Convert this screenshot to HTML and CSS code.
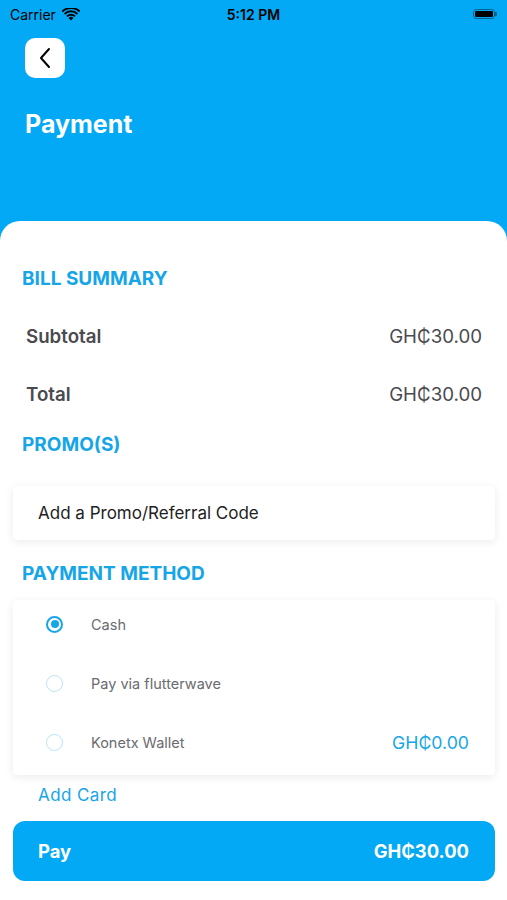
FILE: index.html
```html
<!DOCTYPE html>
<html lang="en">

<head>
    <meta charset="UTF-8">
    <meta name="viewport" content="width=device-width, initial-scale=1.0">
    <title>Payment</title>
    <link rel="stylesheet" href="styles.css">
</head>

<body>
    <div class="status-bar">
        <div class="carrier">
            Carrier
            <svg class="wifi" width="18" height="13" viewBox="0 0 18 13">
                <path d="M9 12.5 L6.6 10 A3.4 3.4 0 0 1 11.4 10 Z" fill="#000" />
                <path d="M4.3 7.7 A6.6 6.6 0 0 1 13.7 7.7 L12.3 9.1 A4.6 4.6 0 0 0 5.7 9.1 Z" fill="#000" />
                <path d="M1.9 5.3 A10 10 0 0 1 16.1 5.3 L14.7 6.7 A8 8 0 0 0 3.3 6.7 Z" fill="#000" />
                <path d="M-0.4 2.9 A13.3 13.3 0 0 1 18.4 2.9 L17 4.3 A11.3 11.3 0 0 0 1 4.3 Z" fill="#000" />
            </svg>
        </div>
        <div class="clock">5:12 PM</div>
        <div class="battery">
            <div class="battery-body"><div class="battery-level"></div></div>
            <div class="battery-cap"></div>
        </div>
    </div>

    <div class="header">
        <button class="back-button">
            <svg width="14" height="22" viewBox="0 0 14 22">
                <path d="M11 2 L3 11 L11 20" fill="none" stroke="#000" stroke-width="2" stroke-linecap="round" stroke-linejoin="round" />
            </svg>
        </button>
        <h1 class="title">Payment</h1>
    </div>

    <div class="sheet">
        <div class="section-title first">BILL SUMMARY</div>
        <div class="summary-row">
            <span class="label">Subtotal</span>
            <span class="amount">GH₵30.00</span>
        </div>
        <div class="summary-row">
            <span class="label">Total</span>
            <span class="amount">GH₵30.00</span>
        </div>

        <div class="section-title promo-title">PROMO(S)</div>
        <div class="card promo-card">Add a Promo/Referral Code</div>

        <div class="section-title method-title">PAYMENT METHOD</div>
        <div class="card method-card">
            <div class="method-row">
                <span class="radio checked"></span>
                <span class="method-name">Cash</span>
            </div>
            <div class="method-row">
                <span class="radio"></span>
                <span class="method-name">Pay via flutterwave</span>
            </div>
            <div class="method-row">
                <span class="radio"></span>
                <span class="method-name">Konetx Wallet</span>
                <span class="wallet-balance">GH₵0.00</span>
            </div>
        </div>

        <div class="add-card">Add Card</div>

        <button class="pay-button">
            <span>Pay</span>
            <span>GH₵30.00</span>
        </button>
    </div>
</body>

</html>
```

FILE: styles.css
```css
body {
    margin: 0;
    padding: 0;
    height: 100vh;
    display: flex;
    flex-direction: column;
    background: #03a9f4;
    font-family: Inter, "Liberation Sans", "DejaVu Sans", sans-serif;
    overflow: hidden;
}

/* status bar */
.status-bar {
    height: 28px;
    display: flex;
    align-items: center;
    justify-content: space-between;
    padding: 0 10px;
    color: #000;
    font-size: 14px;
}

.carrier {
    display: flex;
    align-items: center;
    gap: 6px;
    width: 120px;
}

.clock {
    font-weight: 600;
}

.battery {
    width: 120px;
    display: flex;
    justify-content: flex-end;
    align-items: center;
}

.battery-body {
    width: 22px;
    height: 10px;
    border: 1px solid rgba(0, 0, 0, 0.4);
    border-radius: 3px;
    padding: 1px;
    box-sizing: border-box;
}

.battery-level {
    width: 100%;
    height: 100%;
    background: #000;
    border-radius: 1px;
}

.battery-cap {
    width: 2px;
    height: 4px;
    background: rgba(0, 0, 0, 0.4);
    border-radius: 0 1px 1px 0;
}

/* header */
.header {
    height: 193px;
    padding: 10px 25px 0;
    box-sizing: border-box;
}

.back-button {
    width: 40px;
    height: 40px;
    border: none;
    border-radius: 10px;
    background: #fff;
    display: flex;
    align-items: center;
    justify-content: center;
    padding: 0;
}

.title {
    margin: 31px 0 0;
    font-size: 25px;
    line-height: 30px;
    font-weight: 700;
    color: #fff;
}

/* white sheet */
.sheet {
    flex: 1;
    background: #fff;
    border-radius: 20px 20px 0 0;
    padding: 0 12px 0 13px;
}

.section-title {
    padding-left: 9px;
    font-size: 19px;
    line-height: 24px;
    font-weight: 700;
    color: #16a6e8;
}

.section-title.first {
    margin-top: 46px;
    margin-bottom: 16px;
}

.summary-row {
    height: 58px;
    display: flex;
    align-items: center;
    justify-content: space-between;
    padding: 0 13px 0 13px;
    font-size: 18.7px;
    color: #4a4a4f;
}

.summary-row .label {
    font-weight: 600;
}

.promo-title {
    margin-top: 10px;
}

.card {
    background: #fff;
    border-radius: 4px;
    box-shadow: 0 2px 10px rgba(0, 0, 0, 0.08);
}

.promo-card {
    margin-top: 29px;
    height: 54px;
    display: flex;
    align-items: center;
    padding-left: 25px;
    font-size: 17px;
    color: #1e1e1e;
}

.method-title {
    margin-top: 22px;
}

.method-card {
    margin-top: 14px;
    padding: 0 26px 9px 33px;
    display: flex;
    flex-direction: column;
    gap: 11px;
}

.method-row {
    height: 48px;
    display: flex;
    align-items: center;
    font-size: 14.5px;
    color: #6b6b70;
}

.radio {
    width: 17px;
    height: 17px;
    border-radius: 50%;
    border: 1px solid #b9e3f6;
    box-sizing: border-box;
    margin-right: 28px;
    position: relative;
}

.radio.checked {
    border: 2px solid #16a6e8;
}

.radio.checked::after {
    content: "";
    position: absolute;
    top: 2.5px;
    left: 2.5px;
    width: 8px;
    height: 8px;
    border-radius: 50%;
    background: #16a6e8;
}

.wallet-balance {
    margin-left: auto;
    font-size: 17.7px;
    color: #16a6e8;
}

.add-card {
    margin-top: 10px;
    padding-left: 25px;
    font-size: 17px;
    line-height: 20px;
    color: #16a6e8;
    letter-spacing: 0.4px;
}

.pay-button {
    margin-top: 16px;
    width: 100%;
    height: 60px;
    border: none;
    border-radius: 12px;
    background: #03a9f4;
    color: #fff;
    font-family: inherit;
    font-size: 18.4px;
    font-weight: 700;
    display: flex;
    align-items: center;
    justify-content: space-between;
    padding: 0 26px 0 25px;
}
```
